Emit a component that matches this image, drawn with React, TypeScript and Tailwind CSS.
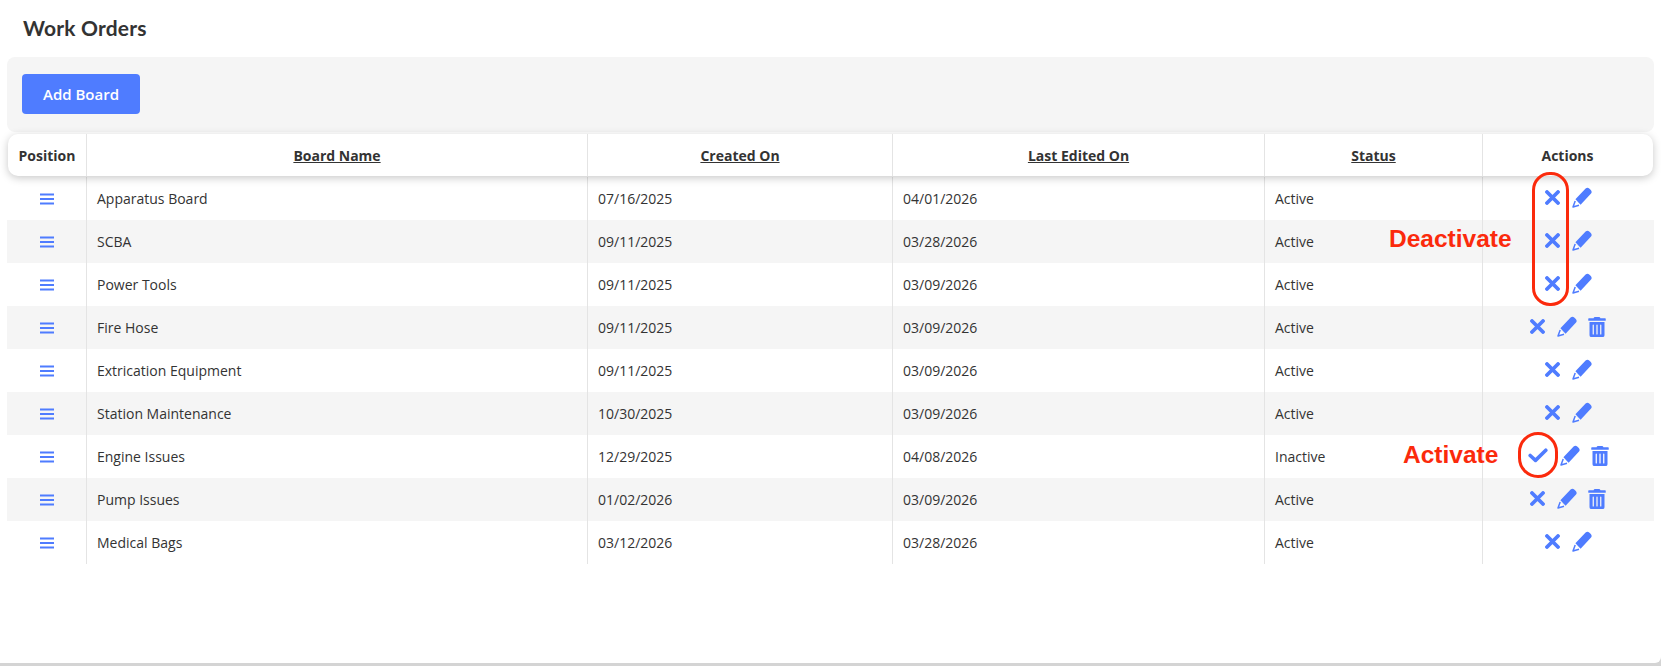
import { FaTrashAlt } from 'react-icons/fa'

const boards = [
  { name: 'Apparatus Board', created: '07/16/2025', edited: '04/01/2026', status: 'Active', trash: false },
  { name: 'SCBA', created: '09/11/2025', edited: '03/28/2026', status: 'Active', trash: false },
  { name: 'Power Tools', created: '09/11/2025', edited: '03/09/2026', status: 'Active', trash: false },
  { name: 'Fire Hose', created: '09/11/2025', edited: '03/09/2026', status: 'Active', trash: true },
  { name: 'Extrication Equipment', created: '09/11/2025', edited: '03/09/2026', status: 'Active', trash: false },
  { name: 'Station Maintenance', created: '10/30/2025', edited: '03/09/2026', status: 'Active', trash: false },
  { name: 'Engine Issues', created: '12/29/2025', edited: '04/08/2026', status: 'Inactive', trash: true },
  { name: 'Pump Issues', created: '01/02/2026', edited: '03/09/2026', status: 'Active', trash: true },
  { name: 'Medical Bags', created: '03/12/2026', edited: '03/28/2026', status: 'Active', trash: false },
]

const rowCols = 'grid grid-cols-[80px_501px_305px_372px_218px_170px]'
const headCols = 'grid grid-cols-[79px_501px_305px_372px_218px_169px]'

function Bars() {
  return (
    <svg width="14" height="12" viewBox="0 0 14 12" className="fill-[#4f7cff]">
      <rect x="0" y="0.5" width="14" height="2" />
      <rect x="0" y="5" width="14" height="2" />
      <rect x="0" y="9.5" width="14" height="2" />
    </svg>
  )
}

function Cross() {
  return (
    <svg width="15" height="15" viewBox="0 0 15 15" className="stroke-[#4f7cff]" fill="none" strokeWidth="3.8" strokeLinecap="round">
      <path d="M2 2 13 13M13 2 2 13" />
    </svg>
  )
}

function Check() {
  return (
    <svg width="20" height="15" viewBox="0 0 20 15" className="stroke-[#4f7cff]" fill="none" strokeWidth="3.6" strokeLinecap="round" strokeLinejoin="round">
      <path d="M2.2 7.5 7.5 12.4 17.8 2.2" />
    </svg>
  )
}

function Pencil() {
  return (
    <svg width="20" height="21" viewBox="0 0 20 21" className="fill-[#4f7cff]">
      <path d="M3.4 12.2 13.6 1.6q1.9-1.7 3.6-.1l1.6 1.6q1.7 1.8 0 3.6L8.6 17.8Z" />
      <path d="M3.2 14 1 20 7 18.2" fill="#fff" stroke="#4f7cff" strokeWidth="1.5" strokeLinejoin="round" />
    </svg>
  )
}

export default function App() {
  return (
    <div className="relative h-[666px] overflow-hidden bg-[#d4d4d4] font-['Open_Sans',sans-serif] text-[#333]">
      <div className="h-[663px] rounded-br-[6px] bg-white">
        <h1 className="pl-[23px] pt-[15px] font-['Lato',sans-serif] text-[21px] leading-[26px] font-bold tracking-[0.2px] text-[#333]">
          Work Orders
        </h1>

        <div className="mx-[7px] mt-[16px] h-[75px] rounded-[8px] bg-[#f5f5f5] pl-[15px] pt-[17px]">
          <button className="h-[40px] w-[118px] rounded-[4px] bg-[#4f7cff] text-[15px] font-semibold text-white">
            Add Board
          </button>
        </div>

        <div className="mx-[7px] mt-[2px]">
          <div className={`${headCols} relative z-10 mx-[1px] mb-[1px] h-[42px] items-center rounded-[10px] bg-white text-[14px] font-bold shadow-[0_2px_8px_rgba(0,0,0,0.22)]`}>
            <div className="flex h-full items-center justify-center border-r border-[#e4e4e4]">Position</div>
            <div className="flex h-full items-center justify-center border-r border-[#e4e4e4] underline">Board Name</div>
            <div className="flex h-full items-center justify-center border-r border-[#e4e4e4] underline">Created On</div>
            <div className="flex h-full items-center justify-center border-r border-[#e4e4e4] underline">Last Edited On</div>
            <div className="flex h-full items-center justify-center border-r border-[#e4e4e4] underline">Status</div>
            <div className="flex h-full items-center justify-center">Actions</div>
          </div>

          {boards.map((b, i) => (
            <div key={b.name} className={`${rowCols} h-[43px] items-center text-[14px] ${i % 2 === 1 ? 'bg-[#f5f5f5]' : 'bg-white'}`}>
              <div className="flex h-full items-center justify-center border-r border-[#e4e4e4]">
                <Bars />
              </div>
              <div className="flex h-full items-center border-r border-[#e4e4e4] pl-[10px]">{b.name}</div>
              <div className="flex h-full items-center border-r border-[#e4e4e4] pl-[10px]">{b.created}</div>
              <div className="flex h-full items-center border-r border-[#e4e4e4] pl-[10px]">{b.edited}</div>
              <div className="flex h-full items-center border-r border-[#e4e4e4] pl-[10px]">{b.status}</div>
              <div className="flex h-full items-center justify-center pb-[2px] text-[#4f7cff]">
                {b.status === 'Active' ? <Cross /> : <Check />}
                <span className="ml-[12px]">
                  <Pencil />
                </span>
                {b.trash && <FaTrashAlt className="ml-[11px] h-[20px] w-[18px]" />}
              </div>
            </div>
          ))}
        </div>
      </div>

      {/* screenshot annotations */}
      <div className="absolute left-[1389px] top-[224px] z-20 font-['Liberation_Sans',sans-serif] text-[24.5px] leading-[30px] font-bold text-[#fb2a0c]">
        Deactivate
      </div>
      <div className="absolute left-[1532px] top-[172px] z-20 h-[134px] w-[37px] rounded-[18px] border-[3px] border-[#fb2a0c]" />
      <div className="absolute left-[1403px] top-[440px] z-20 font-['Liberation_Sans',sans-serif] text-[24.5px] leading-[30px] font-bold text-[#fb2a0c]">
        Activate
      </div>
      <div className="absolute left-[1518px] top-[432px] z-20 h-[46px] w-[40px] rounded-[20px] border-[3px] border-[#fb2a0c]" />
    </div>
  )
}
